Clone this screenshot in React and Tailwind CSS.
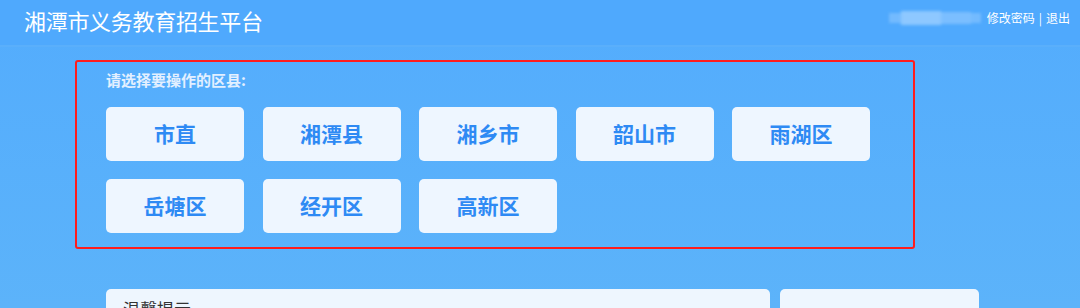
import React from "react";

const rows = [
  ["市直", "湘潭县", "湘乡市", "韶山市", "雨湖区"],
  ["岳塘区", "经开区", "高新区"],
];

export default function App() {
  const font = { fontFamily: '"Noto Sans CJK SC", "Noto Sans", sans-serif' };
  return (
    <div
      className="w-[1080px] h-[308px] overflow-hidden bg-gradient-to-b from-[#53acfd] to-[#5cb3fa]"
      style={font}
    >
      <header className="h-[47px] bg-[#4fa9fd] border-b-2 border-[#5aaffb] flex items-center justify-between pl-[24px] pr-[10px]">
        <h1 className="text-white text-[22px] leading-none tracking-[-0.3px] mt-[-6px]">
          湘潭市义务教育招生平台
        </h1>
        <div className="flex items-center mt-[-10px] text-white text-[12px] leading-none">
          <div className="flex items-center mr-[6px] blur-[1.5px]">
            <span className="block w-[12px] h-[10px] bg-[#8cc6ff]/60" />
            <span className="block w-[40px] h-[14px] bg-[#9dd0ff]/80" />
            <span className="block w-[30px] h-[12px] bg-[#8ec8ff]/70" />
            <span className="block w-[10px] h-[10px] bg-[#8cc6ff]/60" />
          </div>
          <span>修改密码</span>
          <span className="mx-[4px]">|</span>
          <span>退出</span>
        </div>
      </header>

      <main className="pl-[75px] pt-[13px]">
        <section className="w-[840px] h-[189px] border-2 border-[#ff1c1c] rounded-[3px] pl-[29px] pt-[8px]">
          <p className="text-[#e3f0ff] text-[15px] font-bold leading-[20px]">
            请选择要操作的区县:
          </p>
          <div className="mt-[17px] flex flex-col gap-y-[18px]">
            {rows.map((row, i) => (
              <div key={i} className="flex gap-x-[18.5px]">
                {row.map((name) => (
                  <button
                    key={name}
                    className="w-[138px] h-[54px] rounded-[5px] bg-[#eef6ff] text-[#2e8af4] text-[21px] font-bold flex items-center justify-center"
                  >
                    {name}
                  </button>
                ))}
              </div>
            ))}
          </div>
        </section>

        <div className="mt-[40px] pl-[31px] flex gap-x-[10px]">
          <div className="w-[664px] h-[40px] rounded-t-[5px] bg-[#eef6fe] pl-[17px] pt-[11px] text-[17px] text-[#333] leading-none">
            温馨提示
          </div>
          <div className="w-[199px] h-[40px] rounded-t-[5px] bg-[#eef6fe]" />
        </div>
      </main>
    </div>
  );
}
